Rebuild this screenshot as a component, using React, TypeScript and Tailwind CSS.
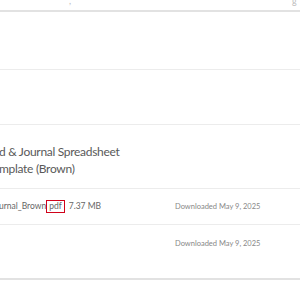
import React from "react";

export default function App() {
  return (
    <div className="w-[300px] h-[300px] overflow-hidden bg-white relative" style={{ fontFamily: "Lato, 'Open Sans', sans-serif" }}>
      <div className="h-[10px] relative">
        <span className="absolute left-[69px] -top-[4px] text-[9px] leading-none text-[#bbb]">,</span>
        <span className="absolute left-[292px] -top-[4px] text-[9px] leading-none text-[#bbb]">g</span>
      </div>
      <div className="h-[2px] bg-[#e2e2e2]" />
      <div className="h-[57px]" />
      <div className="h-[1px] bg-[#ececec]" />
      <div className="h-[54px]" />
      <div className="h-[1px] bg-[#ececec]" />
      <div className="h-[63px] flex flex-col justify-center pt-[6px] text-[12px] leading-[17px] text-[#595959] tracking-[-0.3px]">
        <div className="whitespace-nowrap -ml-[1px]">d &amp; Journal Spreadsheet</div>
        <div className="whitespace-nowrap -ml-[1px]">mplate (Brown)</div>
      </div>
      <div className="h-[1px] bg-[#ececec]" />
      <div className="h-[35px] flex items-center text-[8.5px] text-[#666]">
        <div className="w-[175px] flex items-center whitespace-nowrap">
          <span className="-ml-[1px]">urnal_Brown</span>
          <span className="border border-[#d0021b] px-[2px] leading-[11px]">pdf</span>
          <span className="ml-[4px]">7.37 MB</span>
        </div>
        <span className="text-[7.5px] text-[#888] whitespace-nowrap">Downloaded May 9, 2025</span>
      </div>
      <div className="h-[1px] bg-[#ececec]" />
      <div className="h-[53px] flex items-start pt-[13px] text-[7.5px] text-[#888]">
        <span className="ml-[175px] whitespace-nowrap">Downloaded May 9, 2025</span>
      </div>
      <div className="h-[2px] bg-[#e2e2e2]" />
    </div>
  );
}
